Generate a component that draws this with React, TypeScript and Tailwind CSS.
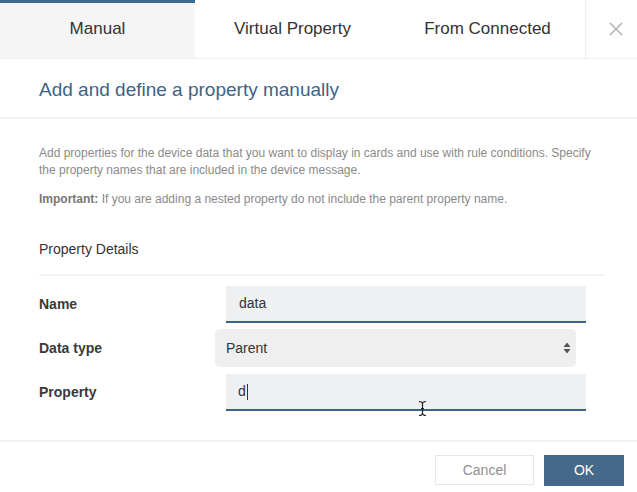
import React from "react";

const font = { fontFamily: '"Liberation Sans", Arial, sans-serif' };

function Tab({ label, active }: { label: string; active?: boolean }) {
  return (
    <div
      className={
        "w-[195px] h-full flex items-center justify-center text-[17px] text-[#333] " +
        (active ? "bg-[#f5f5f5] border-t-[3px] border-[#3f6a8c] pb-[3px]" : "bg-white")
      }
    >
      {label}
    </div>
  );
}

function Row({ label, children }: { label: string; children: React.ReactNode }) {
  return (
    <div className="flex items-center">
      <div className="w-[187px] text-[14px] font-semibold text-[#3a3a3a]">{label}</div>
      {children}
    </div>
  );
}

export default function App() {
  return (
    <div className="w-[637px] h-[492px] bg-white overflow-hidden flex flex-col" style={font}>
      {/* tabs */}
      <div className="h-[59px] flex border-b border-[#efefef]">
        <Tab label="Manual" active />
        <Tab label="Virtual Property" />
        <Tab label="From Connected" />
        <div className="flex-1 border-l border-[#eeeeee] flex items-center justify-center">
          <svg width="14" height="14" viewBox="0 0 14 14" className="ml-[8px]">
            <path d="M1 1L13 13M13 1L1 13" stroke="#b3b3b3" strokeWidth="1.6" />
          </svg>
        </div>
      </div>

      {/* heading */}
      <div className="h-[60px] flex items-center px-[39px] border-b-2 border-[#f2f2f2]">
        <h2 className="text-[19px] text-[#3d6485] pt-[4px]">Add and define a property manually</h2>
      </div>

      {/* body */}
      <div className="pl-[39px] pr-[32px] pt-[26px]">
        <p className="text-[12px] leading-[17px] text-[#8a8a8a] pr-[10px]">
          Add properties for the device data that you want to display in cards and use with rule conditions. Specify
          the property names that are included in the device message.
        </p>
        <p className="text-[12px] leading-[17px] text-[#8a8a8a] mt-[12px]">
          <span className="font-bold text-[#777]">Important:</span> If you are adding a nested property do not include
          the parent property name.
        </p>
        <div className="mt-[31px] pb-[15px] border-b-2 border-[#f2f2f2] text-[14px] leading-[20px] text-[#333]">
          Property Details
        </div>

        <div className="flex flex-col pt-[10px] gap-[6px]">
          <Row label="Name">
            <div className="w-[360px] h-[37px] bg-[#eff0f1] border-b-2 border-[#3d6485] flex items-center pl-[13px] text-[14px] text-[#333]">
              data
            </div>
          </Row>
          <Row label="Data type">
            <div className="-ml-[11px] w-[361px] h-[38px] bg-[#efefef] rounded-[5px] flex items-center pl-[11px] pr-[5px] text-[14px] text-[#333]">
              <span className="flex-1">Parent</span>
              <svg width="8" height="12" viewBox="0 0 8 12">
                <path d="M4 0.5L7.5 5H0.5Z M4 11.5L7.5 7H0.5Z" fill="#555" />
              </svg>
            </div>
          </Row>
          <Row label="Property">
            <div className="relative mt-px w-[360px] h-[37px] bg-[#eff0f1] border-b-2 border-[#3d6485] flex items-center pl-[12px] text-[14px] text-[#333]">
              d<span className="inline-block w-px h-[16px] bg-[#333] ml-px" />
              <svg width="9" height="17" viewBox="0 0 9 17" className="absolute left-[192px] top-[26px]">
                <path d="M1 1.5Q4.5 1.5 4.5 4V13Q4.5 15.5 1 15.5M8 1.5Q4.5 1.5 4.5 4V13Q4.5 15.5 8 15.5M3 8.5H6" stroke="#222" strokeWidth="1.2" fill="none" />
              </svg>
            </div>
          </Row>
        </div>
      </div>

      {/* footer */}
      <div className="mt-[29px] border-t-2 border-[#f2f2f2] flex justify-end gap-[10px] pt-[13px] pr-[13px]">
        <button className="w-[99px] h-[30px] border border-[#e6e6e6] bg-white text-[14px] text-[#8f8f8f]">Cancel</button>
        <button className="w-[80px] h-[31px] bg-[#44698a] text-[14px] text-white">OK</button>
      </div>
    </div>
  );
}
